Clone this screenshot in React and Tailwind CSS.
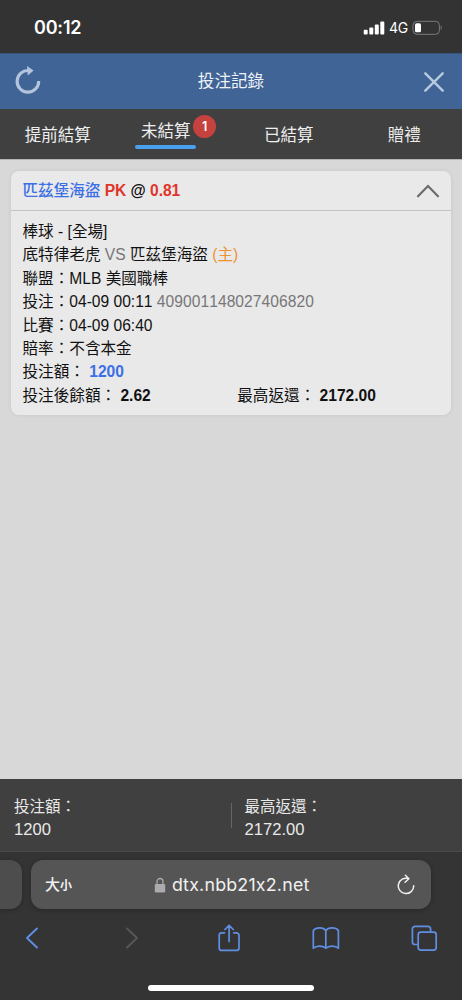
const pestanas = [
  { nombre: '提前結算' },
  { nombre: '未結算', activa: true, cantidad: 1 },
  { nombre: '已結算' },
  { nombre: '贈禮' },
]

function BarraEstado() {
  return (
    <div className="h-[53px] flex items-center justify-between pl-[34px] pr-[19px] pt-[3px] font-['Inter',sans-serif] text-white">
      <span className="text-[18px] leading-none font-semibold tracking-[-0.2px]">00:12</span>
      <div className="flex items-center">
        <svg width="22" height="14" viewBox="0 0 22 14" fill="white">
          <rect x="0.7" y="8.7" width="4" height="4.8" rx="1" />
          <rect x="6.3" y="6.5" width="4" height="7" rx="1" />
          <rect x="11.8" y="3.6" width="4" height="9.9" rx="1" />
          <rect x="17.3" y="0.5" width="4" height="13" rx="1" />
        </svg>
        <span className="ml-[4px] text-[14px] leading-none w-[19px] whitespace-nowrap tracking-[-0.4px]">4G</span>
        <svg className="ml-[4px]" width="31" height="16" viewBox="0 0 31 16" fill="none">
          <rect x="1" y="1.3" width="26.4" height="13" rx="4" stroke="#7b7b7b" />
          <rect x="3" y="3.3" width="6" height="9" rx="1.5" fill="white" />
          <path d="M28.7 5.5c1.3.6 1.3 4 0 4.6z" fill="#7b7b7b" />
        </svg>
      </div>
    </div>
  )
}

function Encabezado() {
  return (
    <div className="h-14 bg-[#406496] flex items-center justify-between pl-[14px] pr-[17px] border-t border-[#38557f]">
      <svg className="mb-[3px]" width="28" height="30" viewBox="0 0 28 30" fill="none">
        <path d="M15 5.6A10.8 10.8 0 1 0 24.7 16" stroke="#b3c4dc" strokeWidth="3.1" />
        <path d="M13 1L19.6 5.6L13.8 10.4z" fill="#b3c4dc" />
      </svg>
      <h1 className="text-[16.6px] leading-none text-[#eef2f8] pr-[3px] pt-[2px]">投注記錄</h1>
      <svg width="22" height="22" viewBox="0 0 22 22" fill="none" stroke="#b9c9df" strokeWidth="2.4" strokeLinecap="round">
        <path d="M2.3 2.3L19.7 19.7M19.7 2.3L2.3 19.7" />
      </svg>
    </div>
  )
}

function Pestanas() {
  return (
    <div className="h-[50px] bg-[#404040] grid grid-cols-4 text-[16.5px] leading-none text-[#eeeeee]">
      {pestanas.map(p => (
        <div key={p.nombre} className={p.activa ? 'flex justify-center pt-[14px] pr-[15px]' : 'flex justify-center pt-[18px]'}>
          {p.activa ? (
            <div className="relative w-[61px] text-center">
              {p.nombre}
              <div className="mt-[5px] h-[4px] rounded-sm bg-[#4aa0ee]" />
              <span className="absolute left-[58px] -top-[8px] size-[23px] rounded-full bg-[#c5423f] text-white text-[12.5px] font-semibold font-['Inter',sans-serif] flex items-center justify-center pt-px">
                {p.cantidad}
              </span>
            </div>
          ) : p.nombre}
        </div>
      ))}
    </div>
  )
}

function Apuesta() {
  return (
    <div className="rounded-lg bg-[#e9e9e9] shadow-[0_0_4px_rgba(0,0,0,0.08)] text-[15.6px] leading-[23.4px] text-[#111]">
      <div className="h-10 border-b border-[#c4c4c4] flex items-center justify-between pl-[11.5px] pr-[11px]">
        <p className="font-bold tracking-[-0.03px] whitespace-nowrap">
          <span className="text-[#3b6fe6] font-medium">匹茲堡海盜</span> <span className="text-[#e0352b]">PK</span> @ <span className="text-[#e0352b]">0.81</span>
        </p>
        <svg width="24" height="14" viewBox="0 0 24 14" fill="none" stroke="#6b6b6b" strokeWidth="2.2" strokeLinecap="round">
          <path d="M2 12.3L12 2L22 12.3" />
        </svg>
      </div>
      <div className="pl-[11.5px] pt-[9px] pb-[8px] whitespace-nowrap">
        <p>棒球 - [全場]</p>
        <p>底特律老虎 <span className="text-[#777]">VS</span> 匹茲堡海盜 <span className="text-[#ec9334]">(主)</span></p>
        <p>聯盟：MLB 美國職棒</p>
        <p>投注：04-09 00:11 <span className="text-[#777] tracking-[0.05px]">409001148027406820</span></p>
        <p>比賽：04-09 06:40</p>
        <p>賠率：不含本金</p>
        <p>投注額： <b className="text-[#3b6fe6]">1200</b></p>
        <div className="grid grid-cols-2">
          <p>投注後餘額： <b>2.62</b></p>
          <p className="pl-[0.5px]">最高返還： <b>2172.00</b></p>
        </div>
      </div>
    </div>
  )
}

function Totales() {
  return (
    <div className="h-[73px] bg-[#404040] border-b border-[#4a4a4a] flex pt-[16px] text-[15.5px] leading-[23px] text-[#e9e9e9]">
      <div className="w-[231px] pl-[14px]">
        <p>投注額：</p>
        <p className="text-[16.6px]">1200</p>
      </div>
      <div className="w-px h-[25px] mt-[8px] bg-[#666]" />
      <div className="pl-[12.5px]">
        <p>最高返還：</p>
        <p className="text-[16.6px]">2172.00</p>
      </div>
    </div>
  )
}

function Navegador() {
  return (
    <div className="h-[148px] bg-[#343434] pt-[8px] flex flex-col">
      <div className="flex gap-[9px]">
        <div className="w-[22px] h-[49px] rounded-r-xl bg-[#4d4d4d] shadow-[0_1px_5px_rgba(0,0,0,0.25)]" />
        <div className="w-[400px] h-[49px] rounded-xl bg-[#555] shadow-[0_1px_5px_rgba(0,0,0,0.25)] flex items-center pl-[14px] pr-[16px] text-[#f0f0f0]">
          <p className="w-[109px] leading-none whitespace-nowrap"><span className="text-[15px] font-medium">大</span><span className="text-[12px] font-bold">小</span></p>
          <svg width="12" height="16" viewBox="0 0 12 16" fill="none">
            <path d="M3 8V4.5a3 3 0 0 1 6 0V8" stroke="#aaaaaf" strokeWidth="1.3" />
            <rect x="0.8" y="7" width="10.4" height="8.5" rx="1.3" fill="#aaaaaf" />
          </svg>
          <span className="ml-[6px] pt-px text-[17.8px] leading-none tracking-[0.22px] font-['Inter',sans-serif] [font-feature-settings:'calt'_0]">dtx.nbb21x2.net</span>
          <svg className="ml-auto" width="18" height="22" viewBox="0 0 18 22" fill="none" stroke="#f0f0f0" strokeWidth="1.5" strokeLinecap="round" strokeLinejoin="round">
            <path d="M11.5 4.6A7.7 7.7 0 1 0 16.7 11.8M8.4 1.3L11.9 4.7L8 8.2" />
          </svg>
        </div>
      </div>
      <div className="h-[57px] pt-px flex items-center pl-[25px] text-[#5f8fe3]">
        <svg width="14" height="22" viewBox="0 0 14 22" fill="none" stroke="currentColor" strokeWidth="1.9" strokeLinecap="round" strokeLinejoin="round">
          <path d="M12 1.5L2 11L12 20.5" />
        </svg>
        <svg className="ml-[86px]" width="14" height="22" viewBox="0 0 14 22" fill="none" stroke="#575757" strokeWidth="1.9" strokeLinecap="round" strokeLinejoin="round">
          <path d="M2 1.5L12 11L2 20.5" />
        </svg>
        <svg className="ml-[77.5px]" width="24" height="28" viewBox="0 0 24 28" fill="none" stroke="currentColor" strokeWidth="1.7" strokeLinecap="round" strokeLinejoin="round">
          <path d="M7.5 8.8H4.7a2.5 2.5 0 0 0-2.5 2.5v12.6a2.5 2.5 0 0 0 2.5 2.5h14.8a2.5 2.5 0 0 0 2.5-2.5V11.3a2.5 2.5 0 0 0-2.5-2.5H16.7M12.1 17.5V1.5M7.9 5.5L12.1 1.3l4.2 4.2" />
        </svg>
        <svg className="ml-[71.5px]" width="28" height="24" viewBox="0 0 28 24" fill="none" stroke="currentColor" strokeWidth="1.7" strokeLinejoin="round">
          <path d="M13.8 4.5C11.5 .9 3.8 .9 1.3 4.5V22.3C4 19.3 11.3 19.3 13.8 22.3C16.5 19.3 23.7 19.3 26.4 22.3V4.5C24 .9 16.3 .9 13.8 4.5V22.3" />
        </svg>
        <svg className="ml-[71px]" width="27" height="27" viewBox="0 0 27 27" fill="none" stroke="currentColor" strokeWidth="1.7">
          <path d="M7 19.5H4a2.6 2.6 0 0 1-2.6-2.6V4a2.6 2.6 0 0 1 2.6-2.6h13a2.6 2.6 0 0 1 2.6 2.6v2.8" />
          <rect x="7.2" y="7.2" width="18" height="18" rx="2.6" />
        </svg>
      </div>
      <div className="mt-[19px] mx-auto w-[166px] h-[6px] rounded-full bg-white" />
    </div>
  )
}

export default function App() {
  return (
    <div className="w-[462px] h-[1000px] bg-[#333] flex flex-col overflow-hidden [font-kerning:none] font-['Liberation_Sans','Noto_Sans_CJK_TC',sans-serif]">
      <BarraEstado />
      <Encabezado />
      <Pestanas />
      <div className="flex-1 bg-[#d8d8d8] pt-[12px] px-[11px] shadow-[inset_0_1px_0_#b5b5b5]">
        <Apuesta />
      </div>
      <Totales />
      <Navegador />
    </div>
  )
}
